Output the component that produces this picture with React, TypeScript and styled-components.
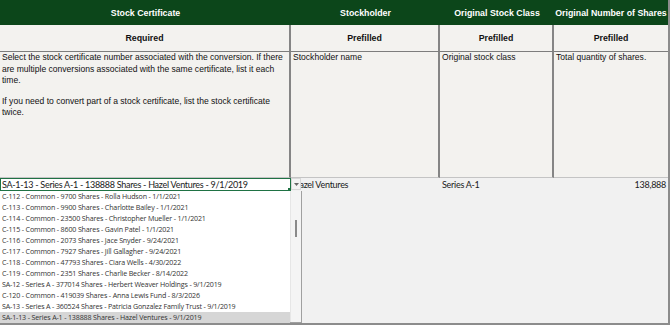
import React from "react";
import styled, { createGlobalStyle } from "styled-components";

const Global = createGlobalStyle`
  html, body { margin: 0; padding: 0; background: #f1f1f1; }
  * { box-sizing: border-box; }
`;

const Frame = styled.div`
  position: relative;
  width: 670px;
  height: 325px;
  background: #f1f1f1;
  border-right: 2px solid #8c8c8c;
  border-bottom: 2px solid #8c8c8c;
  overflow: hidden;
`;

const Sheet = styled.div`
  display: grid;
  grid-template-columns: 291px 149px 114px 114px;
  grid-template-rows: 25px 27px 126px 13px;
`;

const HeaderCell = styled.div`
  background: #0c461a;
  color: #ffffff;
  font-family: "Liberation Sans", Arial, sans-serif;
  font-weight: 700;
  font-size: 8.8px;
  display: flex;
  align-items: center;
  justify-content: center;
  white-space: nowrap;
`;

const TagCell = styled.div<{ $last?: boolean }>`
  background: #f3f2ef;
  border-right: ${(p) => (p.$last ? "none" : "2px solid #858585")};
  border-bottom: 1px solid #7d7d7d;
  color: #111;
  font-family: "Liberation Sans", Arial, sans-serif;
  font-weight: 700;
  font-size: 8.8px;
  display: flex;
  align-items: center;
  justify-content: center;
`;

const NoteCell = styled.div<{ $last?: boolean }>`
  background: #f3f2ef;
  border-right: ${(p) => (p.$last ? "none" : "2px solid #858585")};
  border-bottom: 1px solid #c4c4c4;
  color: #111;
  font-family: "Liberation Sans", Arial, sans-serif;
  font-size: 8.55px;
  line-height: 11.6px;
  padding: 0 1px 0 2px;
`;

const Para = styled.p`
  margin: 0 0 9px 0;
`;

const DataCell = styled.div<{ $align?: "left" | "right"; $selected?: boolean }>`
  position: relative;
  background: ${(p) => (p.$selected ? "#ffffff" : "transparent")};
  border: ${(p) => (p.$selected ? "1px solid #1f7244" : "none")};
  color: #1a1a1a;
  font-family: "Lato", "Noto Sans", sans-serif;
  font-size: 9px;
  letter-spacing: -0.28px;
  line-height: 12px;
  padding: ${(p) => (p.$selected ? "0 1px" : "1px 2px")};
  text-align: ${(p) => p.$align ?? "left"};
  white-space: nowrap;
  overflow: hidden;
`;

const Handle = styled.span`
  position: absolute;
  right: -1px;
  bottom: -1px;
  width: 3px;
  height: 3px;
  background: #1f7244;
`;

const DropButton = styled.div`
  position: absolute;
  left: 291px;
  top: 178px;
  width: 10px;
  height: 12px;
  background: #f3f3f3;
  border: 1px solid #d8d8d8;
  display: flex;
  align-items: center;
  justify-content: center;
`;

const ListBox = styled.div`
  position: absolute;
  left: 0;
  top: 191px;
  width: 302px;
  height: 132px;
  background: #ffffff;
  border-right: 1px solid #a0a0a0;
  border-bottom: 1px solid #a0a0a0;
  display: flex;
`;

const Items = styled.ul`
  list-style: none;
  margin: 0;
  padding: 0;
  width: 290px;
`;

const Item = styled.li<{ $active?: boolean }>`
  height: 11px;
  line-height: 11px;
  padding-left: 2px;
  font-family: "Open Sans", "Noto Sans", sans-serif;
  font-size: 7.1px;
  letter-spacing: -0.16px;
  color: #333;
  white-space: nowrap;
  background: ${(p) => (p.$active ? "#d6d6d6" : "transparent")};
`;

const Track = styled.div`
  flex: 1;
  background: #f4f4f4;
  border-left: 1px solid #e6e6e6;
  position: relative;
`;

const Thumb = styled.span`
  position: absolute;
  left: 4px;
  top: 29px;
  width: 2px;
  height: 17px;
  background: #8a8a8a;
`;

const options = [
  "C-112 - Common - 9700 Shares - Rolla Hudson - 1/1/2021",
  "C-113 - Common - 9900 Shares - Charlotte Bailey - 1/1/2021",
  "C-114 - Common - 23500 Shares - Christopher Mueller - 1/1/2021",
  "C-115 - Common - 8600 Shares - Gavin Patel - 1/1/2021",
  "C-116 - Common - 2073 Shares - Jace Snyder - 9/24/2021",
  "C-117 - Common - 7927 Shares - Jill Gallagher - 9/24/2021",
  "C-118 - Common - 47793 Shares - Ciara Wells - 4/30/2022",
  "C-119 - Common - 2351 Shares - Charlie Becker - 8/14/2022",
  "SA-12 - Series A - 377014 Shares - Herbert Weaver Holdings - 9/1/2019",
  "C-120 - Common - 419039 Shares - Anna Lewis Fund - 8/3/2026",
  "SA-13 - Series A - 360524 Shares - Patricia Gonzalez Family Trust - 9/1/2019",
  "SA-1-13 - Series A-1 - 138888 Shares - Hazel Ventures - 9/1/2019",
];

export default function App() {
  return (
    <Frame>
      <Global />
      <Sheet>
        <HeaderCell>Stock Certificate</HeaderCell>
        <HeaderCell>Stockholder</HeaderCell>
        <HeaderCell>Original Stock Class</HeaderCell>
        <HeaderCell>Original Number of Shares</HeaderCell>

        <TagCell>Required</TagCell>
        <TagCell>Prefilled</TagCell>
        <TagCell>Prefilled</TagCell>
        <TagCell $last>Prefilled</TagCell>

        <NoteCell>
          <Para>
            Select the stock certificate number associated with the conversion. If there
            are multiple conversions associated with the same certificate, list it each
            time.
          </Para>
          <Para>If you need to convert part of a stock certificate, list the stock certificate twice.</Para>
        </NoteCell>
        <NoteCell>Stockholder name</NoteCell>
        <NoteCell>Original stock class</NoteCell>
        <NoteCell $last>Total quantity of shares.</NoteCell>

        <DataCell $selected>
          SA-1-13 - Series A-1 - 138888 Shares - Hazel Ventures - 9/1/2019
          <Handle />
        </DataCell>
        <DataCell>Hazel Ventures</DataCell>
        <DataCell>Series A-1</DataCell>
        <DataCell $align="right">138,888</DataCell>
      </Sheet>

      <DropButton>
        <svg width="5" height="3" viewBox="0 0 5 3">
          <path d="M0 0 L5 0 L2.5 3 Z" fill="#666" />
        </svg>
      </DropButton>

      <ListBox>
        <Items>
          {options.map((o, i) => (
            <Item key={o} $active={i === options.length - 1}>
              {o}
            </Item>
          ))}
        </Items>
        <Track>
          <Thumb />
        </Track>
      </ListBox>
    </Frame>
  );
}
